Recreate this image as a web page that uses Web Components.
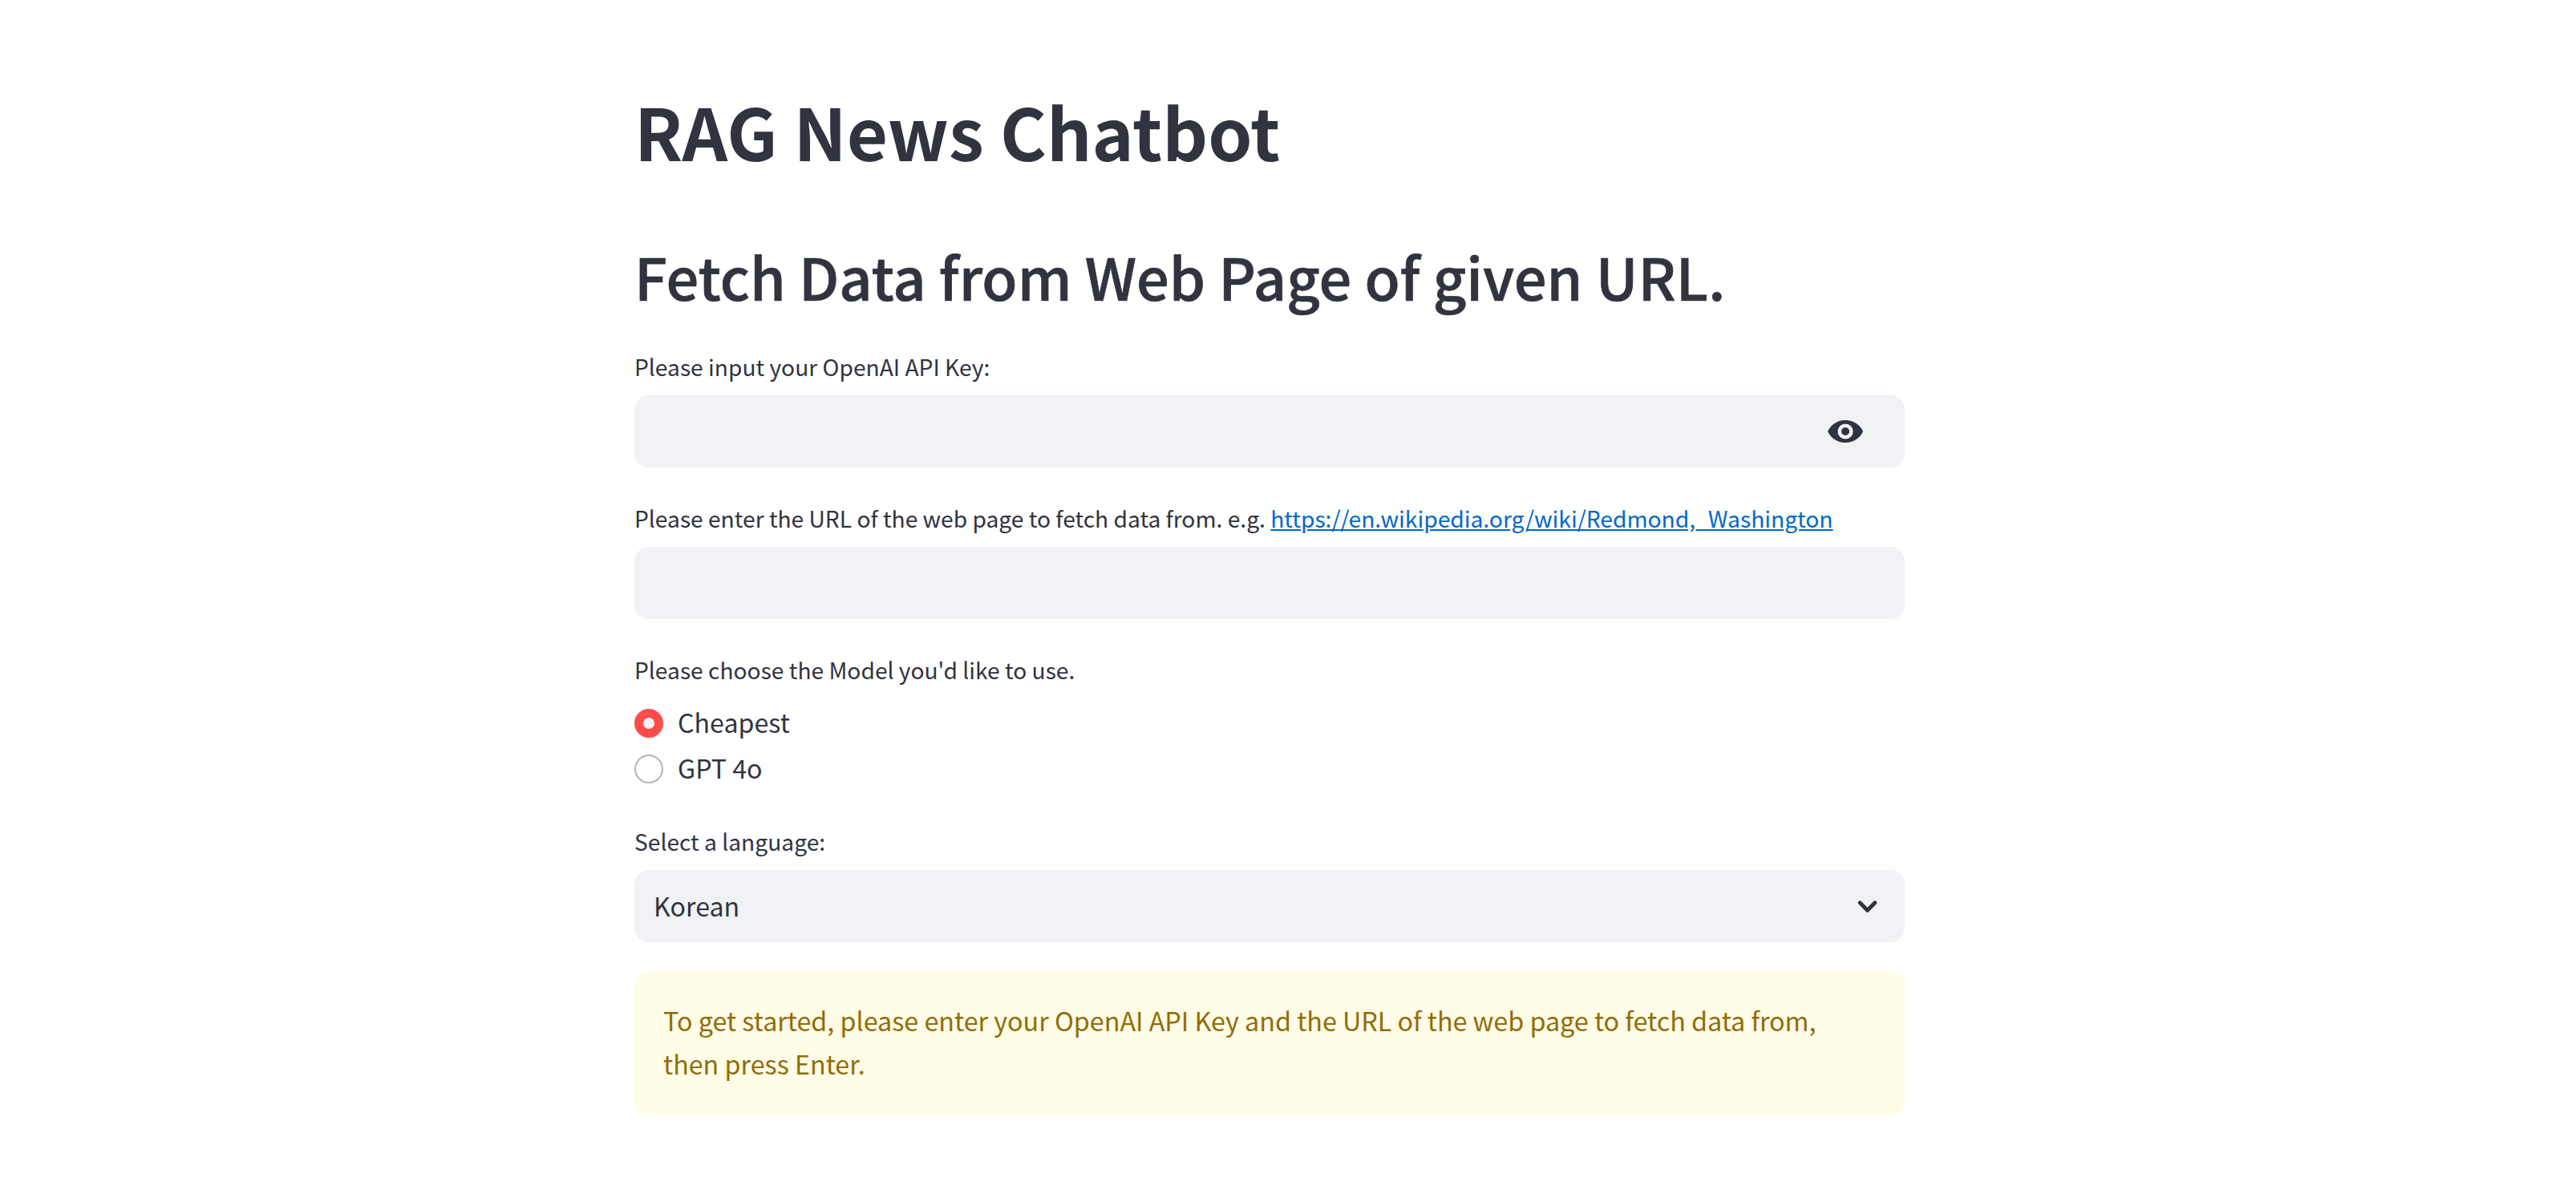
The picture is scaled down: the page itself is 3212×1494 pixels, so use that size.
<!DOCTYPE html>
<html lang="en">
<head>
<meta charset="utf-8">
<title>RAG News Chatbot</title>
<style>
  html, body { margin: 0; background: #fff; }
  body {
    color: #31333f;
    font-family: "Noto Sans CJK KR", "Noto Sans", sans-serif;
  }
</style>
</head>
<body>
<rag-page>
  <rag-heading level="1">RAG News Chatbot</rag-heading>
  <rag-heading level="2">Fetch Data from Web Page of given URL.</rag-heading>
  <rag-input eye>Please input your OpenAI API Key:</rag-input>
  <rag-input>Please enter the URL of the web page to fetch data from. e.g. <a href="#" style="color:#0068c9">https://en.wikipedia.org/wiki/Redmond,_Washington</a></rag-input>
  <rag-radio options="Cheapest|GPT 4o">Please choose the Model you'd like to use.</rag-radio>
  <rag-select value="Korean">Select a language:</rag-select>
  <rag-alert>To get started, please enter your OpenAI API Key and the URL of the web page to fetch data from, then press Enter.</rag-alert>
</rag-page>

<script>
const LABEL_CSS = `label { display: block; font-size: 28.2px; line-height: 45px; padding-top: 4px; margin-bottom: 14px; }`;

class RagPage extends HTMLElement {
  constructor() {
    super();
    this.attachShadow({ mode: "open" });
    // the 46px on the right is the gutter the original page keeps, it isn't centred on the window
    this.shadowRoot.innerHTML = `
      <style>
        :host { display: block; padding: 102px 46px 0 0; }
        main { display: flex; flex-direction: column; gap: 36px; width: 1584px; margin: 0 auto; }
      </style>
      <main><slot></slot></main>`;
  }
}

class RagHeading extends HTMLElement {
  constructor() {
    super();
    this.attachShadow({ mode: "open" });
    const level = this.getAttribute("level");
    this.shadowRoot.innerHTML = `
      <style>
        :host { display: block; }
        .h1 { font-size: 88.4px; font-weight: 700; line-height: 120px; padding-bottom: 4px; }
        /* no semibold cut here, so medium plus a thin stroke */
        .h2 { font-size: 72px; font-weight: 500; -webkit-text-stroke: 0.7px #31333f; line-height: 92px; padding: 36px 0 4px; }
      </style>
      <div class="h${level}" role="heading"><slot></slot></div>`;
  }
}

class RagInput extends HTMLElement {
  constructor() {
    super();
    this.attachShadow({ mode: "open" });
    const eye = this.hasAttribute("eye")
      ? `<svg viewBox="0 0 24 24" width="48" height="48" fill="#31333f"><path fill-rule="evenodd" d="M12 5C7 5 2.73 7.9 1 12c1.73 4.1 6 7 11 7s9.27-2.9 11-7c-1.73-4.1-6-7-11-7zM12 16.8a4.8 4.8 0 1 1 0-9.6 4.8 4.8 0 0 1 0 9.6z"/><circle cx="12" cy="12" r="2.5"/></svg>`
      : "";
    this.shadowRoot.innerHTML = `
      <style>
        :host { display: block; }
        ${LABEL_CSS}
        .box { display: flex; align-items: center; justify-content: flex-end; height: 90px; padding-right: 50px; border-radius: 18px; background: #f0f2f6; }
        svg { display: block; }
      </style>
      <label><slot></slot></label>
      <div class="box">${eye}</div>`;
  }
}

class RagRadio extends HTMLElement {
  constructor() {
    super();
    this.attachShadow({ mode: "open" });
    const rows = this.getAttribute("options").split("|").map((name, i) => `
      <div class="row"><span class="dot ${i === 0 ? "on" : ""}"></span><span>${name}</span></div>`).join("");
    this.shadowRoot.innerHTML = `
      <style>
        :host { display: block; }
        ${LABEL_CSS}
        .row { display: flex; align-items: center; gap: 18px; height: 57.5px; font-size: 32.2px; }
        .dot { box-sizing: border-box; width: 36px; height: 36px; margin-top: 4px; border-radius: 50%; border: 2px solid #b4b5ba; background: #fff; }
        .dot.on { border: 11px solid #ff4b4b; background: #f0f2f6; }
      </style>
      <label><slot></slot></label>
      <div>${rows}</div>`;
  }
}

class RagSelect extends HTMLElement {
  constructor() {
    super();
    this.attachShadow({ mode: "open" });
    this.shadowRoot.innerHTML = `
      <style>
        :host { display: block; }
        ${LABEL_CSS}
        .box { display: flex; align-items: center; justify-content: space-between; height: 90px; padding: 0 24px; border-radius: 18px; background: #f0f2f6; font-size: 32.2px; }
        .box span { margin-bottom: 3px; }
        svg { display: block; }
      </style>
      <label><slot></slot></label>
      <div class="box">
        <span>${this.getAttribute("value")}</span>
        <svg viewBox="0 0 24 24" width="45" height="45" fill="none" stroke="#31333f" stroke-width="2.6" stroke-linecap="round" stroke-linejoin="round"><path d="M7 9.5l5 5 5-5"/></svg>
      </div>`;
  }
}

class RagAlert extends HTMLElement {
  constructor() {
    super();
    this.attachShadow({ mode: "open" });
    this.shadowRoot.innerHTML = `
      <style>
        :host { display: block; padding: 34px 44px 38px 36px; border-radius: 18px; background: #fffce7; color: #926c05; font-size: 32.27px; line-height: 54px; }
      </style>
      <slot></slot>`;
  }
}

customElements.define("rag-page", RagPage);
customElements.define("rag-heading", RagHeading);
customElements.define("rag-input", RagInput);
customElements.define("rag-radio", RagRadio);
customElements.define("rag-select", RagSelect);
customElements.define("rag-alert", RagAlert);
</script>
</body>
</html>
